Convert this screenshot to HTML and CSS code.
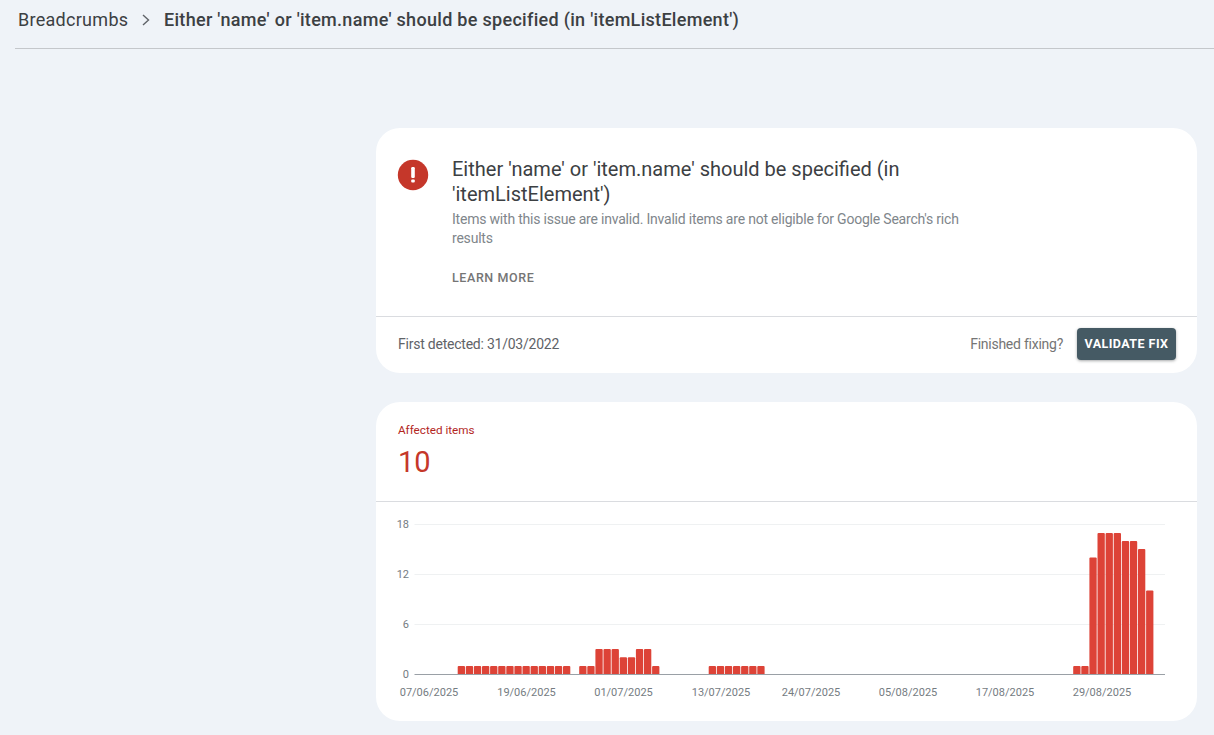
FILE: index.html
```html
<!DOCTYPE html>
<html lang="en">
<head>
<meta charset="utf-8">
<title>Breadcrumbs</title>
<link rel="stylesheet" href="styles.css">
</head>
<body>
<header class="topbar">
  <span class="crumb">Breadcrumbs</span>
  <svg class="crumb-sep" width="10" height="14" viewBox="0 0 10 14"><path d="M2 2l5.5 5L2 12" fill="none" stroke="#5f6368" stroke-width="1.4"/></svg>
  <span class="crumb-current">Either 'name' or 'item.name' should be specified (in 'itemListElement')</span>
</header>
<main class="content">
  <section class="card issue">
    <div class="issue-body">
      <svg class="issue-icon" width="32" height="32" viewBox="0 0 32 32"><circle cx="16" cy="16" r="15.2" fill="#c5372a"/><rect x="14.2" y="8" width="3.6" height="11" rx="1.2" fill="#fff"/><rect x="14.2" y="20.4" width="3.6" height="3.2" rx="1" fill="#fff"/></svg>
      <div class="issue-text">
        <h1 class="issue-title">Either 'name' or 'item.name' should be specified (in 'itemListElement')</h1>
        <p class="issue-desc">Items with this issue are invalid. Invalid items are not eligible for Google Search's rich results</p>
        <a class="learn">LEARN MORE</a>
      </div>
    </div>
    <div class="issue-foot">
      <span class="detected">First detected: 31/03/2022</span>
      <div class="fix">
        <span class="fix-label">Finished fixing?</span>
        <button class="fix-btn"><span class="fix-btn-text">VALIDATE FIX</span></button>
      </div>
    </div>
  </section>
  <section class="card stats">
    <div class="stats-head">
      <div class="stats-label">Affected items</div>
      <div class="stats-value">10</div>
    </div>
    <svg class="chart" width="821" height="219" viewBox="376 502 821 219">
      <g class="grid">
        <line x1="414.5" x2="1165" y1="524.5" y2="524.5"/>
        <line x1="414.5" x2="1165" y1="574.5" y2="574.5"/>
        <line x1="414.5" x2="1165" y1="624.5" y2="624.5"/>
      </g>
      <g class="ylabels">
        <text x="409" y="528">18</text>
        <text x="409" y="578">12</text>
        <text x="409" y="628">6</text>
        <text x="409" y="678">0</text>
      </g>
      <g class="bars">
        <rect x="457.7" y="666" width="7.3" height="9" rx="1"/>
        <rect x="465.8" y="666" width="7.3" height="9" rx="1"/>
        <rect x="473.9" y="666" width="7.3" height="9" rx="1"/>
        <rect x="482" y="666" width="7.3" height="9" rx="1"/>
        <rect x="490.1" y="666" width="7.3" height="9" rx="1"/>
        <rect x="498.2" y="666" width="7.3" height="9" rx="1"/>
        <rect x="506.3" y="666" width="7.3" height="9" rx="1"/>
        <rect x="514.4" y="666" width="7.3" height="9" rx="1"/>
        <rect x="522.5" y="666" width="7.3" height="9" rx="1"/>
        <rect x="530.6" y="666" width="7.3" height="9" rx="1"/>
        <rect x="538.7" y="666" width="7.3" height="9" rx="1"/>
        <rect x="546.8" y="666" width="7.3" height="9" rx="1"/>
        <rect x="554.9" y="666" width="7.3" height="9" rx="1"/>
        <rect x="563" y="666" width="7.3" height="9" rx="1"/>
        <rect x="579.2" y="666" width="7.3" height="9" rx="1"/>
        <rect x="587.3" y="666" width="7.3" height="9" rx="1"/>
        <rect x="595.4" y="649" width="7.3" height="26" rx="1"/>
        <rect x="603.5" y="649" width="7.3" height="26" rx="1"/>
        <rect x="611.6" y="649" width="7.3" height="26" rx="1"/>
        <rect x="619.7" y="657.3" width="7.3" height="17.7" rx="1"/>
        <rect x="627.8" y="657.3" width="7.3" height="17.7" rx="1"/>
        <rect x="635.9" y="649" width="7.3" height="26" rx="1"/>
        <rect x="644" y="649" width="7.3" height="26" rx="1"/>
        <rect x="652.1" y="666" width="7.3" height="9" rx="1"/>
        <rect x="708.7" y="666" width="7.3" height="9" rx="1"/>
        <rect x="716.8" y="666" width="7.3" height="9" rx="1"/>
        <rect x="724.9" y="666" width="7.3" height="9" rx="1"/>
        <rect x="733" y="666" width="7.3" height="9" rx="1"/>
        <rect x="741.1" y="666" width="7.3" height="9" rx="1"/>
        <rect x="749.2" y="666" width="7.3" height="9" rx="1"/>
        <rect x="757.3" y="666" width="7.3" height="9" rx="1"/>
        <rect x="1073.2" y="666" width="7.3" height="9" rx="1"/>
        <rect x="1081.3" y="666" width="7.3" height="9" rx="1"/>
        <rect x="1089.4" y="557.5" width="7.3" height="117.5" rx="1"/>
        <rect x="1097.5" y="533" width="7.3" height="142" rx="1"/>
        <rect x="1105.6" y="533" width="7.3" height="142" rx="1"/>
        <rect x="1113.7" y="533" width="7.3" height="142" rx="1"/>
        <rect x="1121.8" y="541" width="7.3" height="134" rx="1"/>
        <rect x="1129.9" y="541" width="7.3" height="134" rx="1"/>
        <rect x="1138" y="549" width="7.3" height="126" rx="1"/>
        <rect x="1146.1" y="590.5" width="7.3" height="84.5" rx="1"/>
      </g>
      <line class="axis" x1="414.5" x2="1165" y1="674.5" y2="674.5"/>
      <g class="xlabels">
        <text x="429" y="696">07/06/2025</text>
        <text x="526.5" y="696">19/06/2025</text>
        <text x="623.5" y="696">01/07/2025</text>
        <text x="721" y="696">13/07/2025</text>
        <text x="811" y="696">24/07/2025</text>
        <text x="908" y="696">05/08/2025</text>
        <text x="1005" y="696">17/08/2025</text>
        <text x="1102" y="696">29/08/2025</text>
      </g>
    </svg>
  </section>
</main>
</body>
</html>
```
FILE: styles.css
```css
html, body {
  margin: 0;
  padding: 0;
  height: 735px;
  overflow: hidden;
  background: #eff3f8;
  font-family: Roboto, "Liberation Sans", sans-serif;
}
.topbar {
  display: flex;
  align-items: center;
  height: 49px;
  margin-left: 15px;
  padding: 0 0 9px 3px;
  box-sizing: border-box;
  border-bottom: 1px solid #c4c7cb;
  color: #3c4043;
  white-space: nowrap;
}
.crumb { font-size: 18px; letter-spacing: 0.28px; width: 110px; }
.crumb-sep { margin: 0 13px 0 13px; }
.crumb-current { font-size: 18px; font-weight: 500; letter-spacing: 0.3px; }
.content {
  display: flex;
  flex-direction: column;
  gap: 29px;
  width: 821px;
  margin: 79px 0 0 376px;
}
.card { background: #fff; border-radius: 24px; overflow: hidden; }
.issue { height: 245px; display: flex; flex-direction: column; }
.issue-body {
  flex: 1;
  display: flex;
  gap: 23px;
  padding: 31px 0 0 21px;
  border-bottom: 1px solid #dadce0;
}
.issue-icon { flex: none; margin-top: 0; }
.issue-text { width: 520px; }
.issue-title {
  margin: -2px 0 0;
  font-size: 20px;
  line-height: 25px;
  font-weight: 400;
  color: #3c4043;
}
.issue-desc {
  margin: 3px 0 0;
  font-size: 14px;
  letter-spacing: -0.21px;
  line-height: 19px;
  color: #80868b;
}
.learn {
  display: block;
  margin-top: 22px;
  font-size: 12.5px;
  line-height: 16px;
  font-weight: 500;
  letter-spacing: 0.6px;
  color: #757575;
}
.issue-foot {
  height: 56px;
  display: flex;
  align-items: center;
  justify-content: space-between;
  padding: 0 21px 2px 22px;
  box-sizing: border-box;
}
.detected { font-size: 14px; letter-spacing: -0.23px; color: #5f6368; }
.fix { display: flex; align-items: center; gap: 14px; }
.fix-label { font-size: 14px; letter-spacing: -0.25px; color: #757575; }
.fix-btn {
  display: flex;
  align-items: center;
  justify-content: center;
  width: 99px;
  height: 32px;
  padding: 0 0 2px;
  border: 0;
  border-radius: 4px;
  background: #455a64;
  color: #fff;
  font: 700 12.5px Roboto, sans-serif;
  letter-spacing: 0.45px;
  box-shadow: 0 1px 3px rgba(60, 64, 67, .45);
}
.stats { height: 319px; }
.stats-head {
  height: 100px;
  box-sizing: border-box;
  padding: 21px 22px 0;
  border-bottom: 1px solid #dadce0;
}
.stats-label { font-size: 11.7px; line-height: 15px; color: #b3261e; }
.stats-value { margin-top: 6px; font-size: 29px; line-height: 36px; color: #c5372a; }
.chart { display: block; }
.grid line { stroke: #eff1f2; stroke-width: 1; }
.axis { stroke: #9aa0a6; stroke-width: 1; }
.bars rect { fill: #dd4337; }
.ylabels text { font-size: 11px; fill: #757c82; text-anchor: end; }
.xlabels text { font-size: 11px; fill: #757c82; text-anchor: middle; }
```
